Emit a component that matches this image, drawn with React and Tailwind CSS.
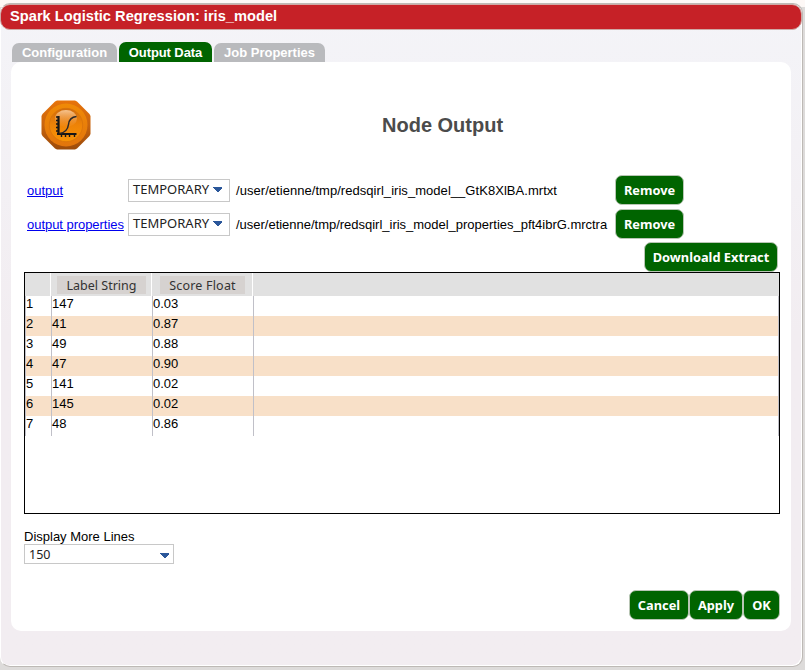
import React from "react";

const rows = [
  ["1", "147", "0.03"],
  ["2", "41", "0.87"],
  ["3", "49", "0.88"],
  ["4", "47", "0.90"],
  ["5", "141", "0.02"],
  ["6", "145", "0.02"],
  ["7", "48", "0.86"],
];

const ubuntu = "font-['Noto_Sans','Open_Sans',sans-serif]";

function Button({ children, className }) {
  return (
    <button
      className={`flex h-[30px] shrink-0 items-center justify-center whitespace-nowrap rounded-[7px] border border-[#b9c6b5] bg-[#006400] pt-px text-[12.8px] font-bold leading-none text-white font-['Noto_Sans','Open_Sans',sans-serif] ${className}`}
    >
      {children}
    </button>
  );
}

function Tab({ children, className }) {
  return (
    <div
      className={`flex items-center justify-center whitespace-nowrap rounded-t-[7px] text-[13px] font-bold leading-none text-white ${className}`}
    >
      {children}
    </div>
  );
}

function Arrow() {
  return (
    <svg width="9" height="5" viewBox="0 0 9 5" className="shrink-0" shapeRendering="crispEdges">
      <path d="M0 0H9V1L5 5H4L0 1Z" fill="#2b579a" />
    </svg>
  );
}

function Select({ children, className }) {
  return (
    <div
      className={`flex shrink-0 items-center justify-between border border-[#c8c8c8] bg-white pl-1 leading-none text-[#222] ${ubuntu} ${className}`}
    >
      {children}
      <Arrow />
    </div>
  );
}

function NodeIcon() {
  return (
    <svg width="50" height="50" viewBox="0 0 50 50">
      <defs>
        <linearGradient id="rim" x1="0" y1="0" x2="0" y2="1">
          <stop offset="0" stopColor="#e8740a" />
          <stop offset="0.5" stopColor="#c8640e" />
          <stop offset="1" stopColor="#9c4b0a" />
        </linearGradient>
        <linearGradient id="face" x1="0" y1="0" x2="0" y2="1">
          <stop offset="0" stopColor="#f08a06" />
          <stop offset="1" stopColor="#e2750c" />
        </linearGradient>
        <linearGradient id="dome" x1="0" y1="0" x2="0" y2="1">
          <stop offset="0" stopColor="#d06b0b" />
          <stop offset="0.5" stopColor="#ee8307" />
          <stop offset="1" stopColor="#f79306" />
        </linearGradient>
        <linearGradient id="shine" x1="0" y1="0" x2="0" y2="1">
          <stop offset="0" stopColor="#ffd9b0" stopOpacity="0.8" />
          <stop offset="1" stopColor="#f9a551" stopOpacity="0.05" />
        </linearGradient>
      </defs>
      <path d="M16 0.5H34L36 1.5L48.5 14L49.5 16V34L48.5 36L36 48.5L34 49.5H16L14 48.5L1.5 36L0.5 34V16L1.5 14L14 1.5Z" fill="url(#rim)" />
      <circle cx="25" cy="25" r="21.5" fill="url(#face)" />
      <circle cx="25" cy="25" r="16.7" fill="url(#dome)" stroke="#d5710a" strokeWidth="0.7" />
      <ellipse cx="25" cy="18.5" rx="11" ry="8.5" fill="url(#shine)" />
      <path d="M17.5 16V35M16 34H35.5" stroke="#171717" strokeWidth="2.2" fill="none" />
      <path
        d="M15 17H17M15 20.5H17M15 24H17M15 27.5H17M15 31H17M20.5 35V37M24.5 35V37M28.5 35V37M33.5 35V37"
        stroke="#171717"
        strokeWidth="1.4"
      />
      <path d="M18.5 33.5C25 32.5 27 28.5 27.5 24.5C28 19.5 30 17 35.5 16.5" stroke="#2d2928" strokeWidth="1.5" fill="none" />
    </svg>
  );
}

function OutputRow({ label, path, labelClass, pathClass }) {
  return (
    <div className="flex h-[34px] items-center">
      <div className={`w-[101px] shrink-0 whitespace-nowrap pt-0.5 text-[13px] text-[#0000ee] underline ${labelClass}`}>{label}</div>
      <Select className="h-[23px] w-[102px] pb-px pr-[7px] text-[13px]">TEMPORARY</Select>
      <div className={`w-[385px] shrink-0 whitespace-nowrap pl-1.5 pt-0.5 text-[13px] ${pathClass}`}>{path}</div>
      <Button className="w-[69px]">Remove</Button>
    </div>
  );
}

export default function App() {
  return (
    <div className="h-[670px] w-[805px] overflow-hidden bg-gradient-to-b from-[#fdf8f6] from-[7px] to-[#dddbda] to-[7px] pt-[3px] font-['Liberation_Sans',Arial,sans-serif] text-black">
      <div className="flex h-[664px] w-[803px] flex-col rounded-[10px] border border-[#bdb9b5] border-l-white bg-gradient-to-b from-[#f4f4f8] to-[#f2edf1] to-50% shadow-[inset_-1px_-1px_0_#fff]">
        <header className="-ml-px h-[26px] shrink-0 rounded-[10px] border border-[#cfa9a5] bg-[#c62127] pl-[9px] pt-0.5 text-[14.67px] font-bold leading-[19px] text-white">
          Spark Logistic Regression: iris_model
        </header>
        <nav className="flex h-8 shrink-0 items-end gap-0.5 pl-[11px]">
          <Tab className="h-[19px] w-[105px] bg-[#b9babd]">Configuration</Tab>
          <Tab className="h-5 w-[93px] bg-[#006400] tracking-[-0.1px]">Output Data</Tab>
          <Tab className="h-[19px] w-[111px] bg-[#b9babd]">Job Properties</Tab>
        </nav>
        <main className="ml-2.5 h-[569px] w-[780px] shrink-0 rounded-[10px] bg-white px-[13px] pr-[11px]">
          <div className="flex h-[111px] items-center pl-[17px] pt-[15px]">
            <NodeIcon />
            <h1 className="ml-[291px] whitespace-nowrap text-xl font-bold leading-none text-[#4b4b4b]">Node Output</h1>
          </div>
          <div className="pl-[3px]">
            <OutputRow
              label="output"
              path="/user/etienne/tmp/redsqirl_iris_model__GtK8XlBA.mrtxt"
              pathClass="tracking-[0.045px]"
            />
            <OutputRow
              label="output properties"
              path="/user/etienne/tmp/redsqirl_iris_model_properties_pft4ibrG.mrctra"
              labelClass="tracking-[-0.04px]"
              pathClass="tracking-[-0.015px]"
            />
          </div>
          <div className="flex justify-end pr-0.5 pt-px">
            <Button className="w-[134px]">Downloald Extract</Button>
          </div>
          <div className="h-[242px] border border-black">
            <div className={`flex h-[23px] bg-[#e1e1e1] text-[12.5px] leading-none text-[#333] ${ubuntu}`}>
              <div className="w-[26px] border-r border-white" />
              <div className="flex w-[101px] border-r border-white pl-[6px] pt-[3px]">
                <div className="flex h-[18px] w-[89px] items-center justify-center whitespace-nowrap bg-[#d6d2d0] pt-0.5">Label String</div>
              </div>
              <div className="flex w-[101px] border-r border-white pl-2 pt-[3px]">
                <div className="flex h-[18px] w-[85px] items-center justify-center whitespace-nowrap bg-[#d6d2d0] pt-0.5 tracking-[0.2px]">Score Float</div>
              </div>
            </div>
            <div>
              {rows.map((r) => (
                <div key={r[0]} className="flex h-5 border-x border-[#c0c0c8] text-[13px] leading-4 even:bg-[#f8e0c8]">
                  <div className="w-[26px] border-r border-[#c0c0c8]">{r[0]}</div>
                  <div className="w-[101px] border-r border-[#c0c0c8]">{r[1]}</div>
                  <div className="w-[101px] border-r border-[#c0c0c8]">{r[2]}</div>
                </div>
              ))}
            </div>
          </div>
          <div className="pt-[15px] text-[13px] leading-[15px]">Display More Lines</div>
          <Select className="h-5 w-[150px] pr-1 pt-0.5 text-[12.5px]">150</Select>
          <div className="flex justify-end pt-[26px]">
            <Button className="w-[60px]">Cancel</Button>
            <Button className="w-[54px]">Apply</Button>
            <Button className="w-[37px]">OK</Button>
          </div>
        </main>
      </div>
    </div>
  );
}
